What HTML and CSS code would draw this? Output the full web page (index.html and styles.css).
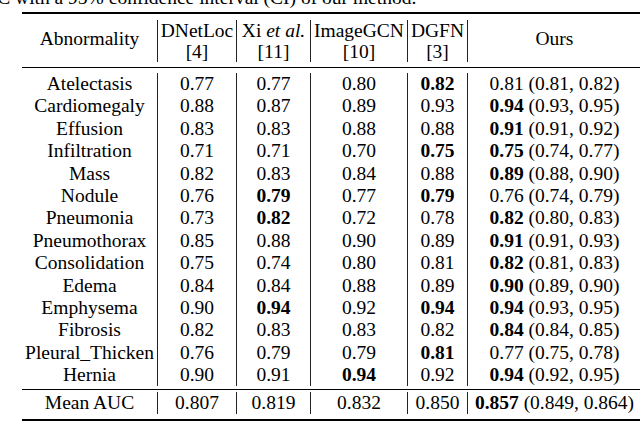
FILE: index.html
```html
<!DOCTYPE html>
<html>
<head>
<meta charset="utf-8">
<link rel="stylesheet" href="styles.css">
</head>
<body>
<div class="page">
  <p class="caption">AUC with a 95% confidence interval (CI) of our method.</p>
  <div class="tbl">
    <div class="rule heavy"></div>
    <div class="sec head">
      <div class="row">
        <div class="cell single">Abnormality</div>
        <div class="cell"><span>DNetLoc</span><span>[4]</span></div>
        <div class="cell"><span>Xi <i>et al.</i></span><span>[11]</span></div>
        <div class="cell"><span>ImageGCN</span><span>[10]</span></div>
        <div class="cell"><span>DGFN</span><span>[3]</span></div>
        <div class="cell single">Ours</div>
      </div>
    </div>
    <div class="rule"></div>
    <div class="sec body">
      <div class="row"><div class="cell">Atelectasis</div><div class="cell">0.77</div><div class="cell">0.77</div><div class="cell">0.80</div><div class="cell"><b>0.82</b></div><div class="cell">0.81 (0.81, 0.82)</div></div>
      <div class="row"><div class="cell">Cardiomegaly</div><div class="cell">0.88</div><div class="cell">0.87</div><div class="cell">0.89</div><div class="cell">0.93</div><div class="cell"><b>0.94</b> (0.93, 0.95)</div></div>
      <div class="row"><div class="cell">Effusion</div><div class="cell">0.83</div><div class="cell">0.83</div><div class="cell">0.88</div><div class="cell">0.88</div><div class="cell"><b>0.91</b> (0.91, 0.92)</div></div>
      <div class="row"><div class="cell">Infiltration</div><div class="cell">0.71</div><div class="cell">0.71</div><div class="cell">0.70</div><div class="cell"><b>0.75</b></div><div class="cell"><b>0.75</b> (0.74, 0.77)</div></div>
      <div class="row"><div class="cell">Mass</div><div class="cell">0.82</div><div class="cell">0.83</div><div class="cell">0.84</div><div class="cell">0.88</div><div class="cell"><b>0.89</b> (0.88, 0.90)</div></div>
      <div class="row"><div class="cell">Nodule</div><div class="cell">0.76</div><div class="cell"><b>0.79</b></div><div class="cell">0.77</div><div class="cell"><b>0.79</b></div><div class="cell">0.76 (0.74, 0.79)</div></div>
      <div class="row"><div class="cell">Pneumonia</div><div class="cell">0.73</div><div class="cell"><b>0.82</b></div><div class="cell">0.72</div><div class="cell">0.78</div><div class="cell"><b>0.82</b> (0.80, 0.83)</div></div>
      <div class="row"><div class="cell">Pneumothorax</div><div class="cell">0.85</div><div class="cell">0.88</div><div class="cell">0.90</div><div class="cell">0.89</div><div class="cell"><b>0.91</b> (0.91, 0.93)</div></div>
      <div class="row"><div class="cell">Consolidation</div><div class="cell">0.75</div><div class="cell">0.74</div><div class="cell">0.80</div><div class="cell">0.81</div><div class="cell"><b>0.82</b> (0.81, 0.83)</div></div>
      <div class="row"><div class="cell">Edema</div><div class="cell">0.84</div><div class="cell">0.84</div><div class="cell">0.88</div><div class="cell">0.89</div><div class="cell"><b>0.90</b> (0.89, 0.90)</div></div>
      <div class="row"><div class="cell">Emphysema</div><div class="cell">0.90</div><div class="cell"><b>0.94</b></div><div class="cell">0.92</div><div class="cell"><b>0.94</b></div><div class="cell"><b>0.94</b> (0.93, 0.95)</div></div>
      <div class="row"><div class="cell">Fibrosis</div><div class="cell">0.82</div><div class="cell">0.83</div><div class="cell">0.83</div><div class="cell">0.82</div><div class="cell"><b>0.84</b> (0.84, 0.85)</div></div>
      <div class="row"><div class="cell">Pleural_Thicken</div><div class="cell">0.76</div><div class="cell">0.79</div><div class="cell">0.79</div><div class="cell"><b>0.81</b></div><div class="cell">0.77 (0.75, 0.78)</div></div>
      <div class="row"><div class="cell">Hernia</div><div class="cell">0.90</div><div class="cell">0.91</div><div class="cell"><b>0.94</b></div><div class="cell">0.92</div><div class="cell"><b>0.94</b> (0.92, 0.95)</div></div>
    </div>
    <div class="rule"></div>
    <div class="sec foot">
      <div class="row"><div class="cell">Mean AUC</div><div class="cell">0.807</div><div class="cell">0.819</div><div class="cell">0.832</div><div class="cell">0.850</div><div class="cell"><b>0.857</b> (0.849, 0.864)</div></div>
    </div>
    <div class="rule heavy"></div>
  </div>
</div>
</body>
</html>
```

FILE: styles.css
```css
html, body {
  margin: 0;
  padding: 0;
  overflow: hidden;
  background: #fff;
}
body {
  font-family: "Liberation Serif", "Times New Roman", serif;
  font-size: 19.5px;
  color: #000;
}
.page {
  width: 640px;
  height: 422px;
  overflow: hidden;
}
.caption {
  margin: -13px 0 0 -31px;
  line-height: 22px;
  white-space: nowrap;
}
.tbl {
  margin: 3px 0 0 22px;
  width: 619px;
}
.rule {
  height: 1px;
  background: #000;
}
.rule.heavy {
  height: 2px;
}
.row {
  display: grid;
  grid-template-columns: 135px 79px 74px 97px 60px 174px;
}
.cell {
  text-align: center;
  white-space: nowrap;
  border-left: 1px solid #222;
}
.cell:first-child {
  border-left: none;
}
.head {
  padding: 6px 0 5px;
}
.head .cell {
  height: 42px;
  box-sizing: border-box;
  display: flex;
  flex-direction: column;
  justify-content: center;
  align-items: center;
  line-height: 21px;
}
.head .single {
  padding-bottom: 5px;
}
.body {
  padding: 5px 0 3px;
}
.body .cell {
  height: 22.4px;
  line-height: 22.4px;
}
.foot {
  padding: 2px 0 5px;
}
.foot .cell {
  height: 22px;
  line-height: 22px;
}
```
